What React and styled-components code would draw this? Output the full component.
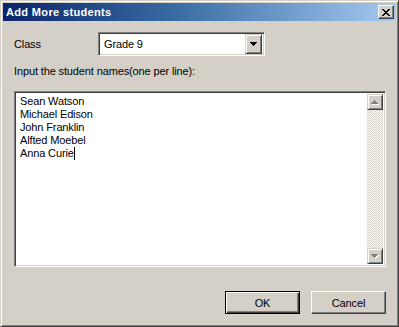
import React from 'react';
import styled, { createGlobalStyle } from 'styled-components';

const GlobalStyle = createGlobalStyle`
  html, body {
    margin: 0;
    padding: 0;
    background: #d4d0c8;
  }
  body {
    font-family: "Liberation Sans", Arial, sans-serif;
    font-size: 11px;
    letter-spacing: -0.13px;
    color: #000;
  }
`;

const Window = styled.div`
  box-sizing: border-box;
  width: 399px;
  height: 327px;
  display: flex;
  flex-direction: column;
  padding: 2px;
  background: #d4d0c8;
  border: 1px solid;
  border-color: #d4d0c8 #404040 #404040 #d4d0c8;
  box-shadow: inset 1px 1px #fff, inset -1px -1px #808080;
`;

const TitleBar = styled.div`
  height: 18px;
  display: flex;
  align-items: center;
  justify-content: space-between;
  padding: 0 2px 0 3px;
  background: linear-gradient(to right, #0a246a 0%, #3a6ea5 45%, #a6caf0 100%);
`;

const Title = styled.span`
  color: #fff;
  font-weight: bold;
  font-size: 11px;
  letter-spacing: 0.35px;
`;

const CloseButton = styled.div`
  box-sizing: border-box;
  width: 16px;
  height: 14px;
  display: flex;
  align-items: center;
  justify-content: center;
  background: #d4d0c8;
  border: 1px solid;
  border-color: #fff #404040 #404040 #fff;
  box-shadow: inset -1px -1px #808080;
`;

const Body = styled.div`
  flex: 1;
  display: flex;
  flex-direction: column;
  padding: 11px 10px 10px 11px;
`;

const FieldRow = styled.div`
  display: flex;
  align-items: center;
  height: 24px;
`;

const Label = styled.span`
  width: 84px;
  line-height: 13px;
`;

const Sunken = styled.div`
  box-sizing: border-box;
  background: #fff;
  border: 1px solid;
  border-color: #808080 #fff #fff #808080;
  box-shadow: inset 1px 1px #404040, inset -1px -1px #d4d0c8;
`;

const Combo = styled(Sunken)`
  width: 167px;
  height: 24px;
  display: flex;
  align-items: center;
  padding: 2px;
`;

const ComboValue = styled.span`
  flex: 1;
  padding-left: 3px;
`;

const RaisedButton = styled.div`
  box-sizing: border-box;
  width: 16px;
  display: flex;
  align-items: center;
  justify-content: center;
  background: #d4d0c8;
  border: 1px solid;
  border-color: #d4d0c8 #404040 #404040 #d4d0c8;
  box-shadow: inset 1px 1px #fff, inset -1px -1px #808080;
`;

const DropButton = styled(RaisedButton)`
  width: 17px;
  height: 20px;
`;

const Prompt = styled.div`
  margin-top: 9px;
  line-height: 13px;
`;

const Memo = styled(Sunken)`
  margin-top: 13px;
  height: 176px;
  display: flex;
  padding: 2px;
`;

const MemoText = styled.div`
  flex: 1;
  padding: 1px 0 0 3px;
  line-height: 13px;
`;

const Caret = styled.span`
  display: inline-block;
  width: 1px;
  height: 13px;
  background: #000;
  vertical-align: -3px;
`;

const ScrollBar = styled.div`
  width: 16px;
  display: flex;
  flex-direction: column;
`;

const ScrollButton = styled(RaisedButton)`
  height: 16px;
`;

const ScrollTrack = styled.div`
  flex: 1;
  background: repeating-conic-gradient(#d4d0c8 0 25%, #fff 0 50%) 0 0 / 2px 2px;
`;

const ButtonRow = styled.div`
  margin-top: auto;
  display: flex;
  justify-content: flex-end;
  gap: 11px;
`;

const Button = styled.div`
  box-sizing: border-box;
  width: 75px;
  height: 23px;
  display: flex;
  align-items: center;
  justify-content: center;
  background: #d4d0c8;
  border: 1px solid;
  border-color: ${({ $default }) => ($default ? '#000' : '#fff #404040 #404040 #fff')};
  box-shadow: ${({ $default }) =>
    $default
      ? 'inset 1px 1px #fff, inset -1px -1px #404040, inset -2px -2px #808080'
      : 'inset -1px -1px #808080'};
`;

const CloseIcon = () => (
  <svg width="8" height="7" viewBox="0 0 8 7" shapeRendering="crispEdges">
    <path
      d="M0 0h2v1h-2zM6 0h2v1h-2zM1 1h2v1h-2zM5 1h2v1h-2zM2 2h4v1h-4zM3 3h2v1h-2zM2 4h4v1h-4zM1 5h2v1h-2zM5 5h2v1h-2zM0 6h2v1h-2zM6 6h2v1h-2z"
      fill="#000"
    />
  </svg>
);

const Arrow = ({ down, disabled }) => {
  const up = 'M3 0h1v1h1v1h1v1h1v1h-7v-1h1v-1h1v-1h1z';
  const dn = 'M0 0h7v1h-1v1h-1v1h-1v1h-1v-1h-1v-1h-1v-1h-1z';
  const d = down ? dn : up;
  return (
    <svg width="8" height="5" viewBox="0 0 8 5" shapeRendering="crispEdges">
      {disabled && <path d={d} fill="#fff" transform="translate(1 1)" />}
      <path d={d} fill={disabled ? '#808080' : '#000'} />
    </svg>
  );
};

const students = ['Sean Watson', 'Michael Edison', 'John Franklin', 'Alfted Moebel', 'Anna Curie'];

export default function App() {
  return (
    <>
      <GlobalStyle />
      <Window>
        <TitleBar>
          <Title>Add More students</Title>
          <CloseButton>
            <CloseIcon />
          </CloseButton>
        </TitleBar>
        <Body>
          <FieldRow>
            <Label>Class</Label>
            <Combo>
              <ComboValue>Grade 9</ComboValue>
              <DropButton>
                <Arrow down />
              </DropButton>
            </Combo>
          </FieldRow>
          <Prompt>Input the student names(one per line):</Prompt>
          <Memo>
            <MemoText>
              {students.map((name, i) => (
                <div key={name}>
                  {name}
                  {i === students.length - 1 && <Caret />}
                </div>
              ))}
            </MemoText>
            <ScrollBar>
              <ScrollButton>
                <Arrow disabled />
              </ScrollButton>
              <ScrollTrack />
              <ScrollButton>
                <Arrow down disabled />
              </ScrollButton>
            </ScrollBar>
          </Memo>
          <ButtonRow>
            <Button $default>OK</Button>
            <Button>Cancel</Button>
          </ButtonRow>
        </Body>
      </Window>
    </>
  );
}
